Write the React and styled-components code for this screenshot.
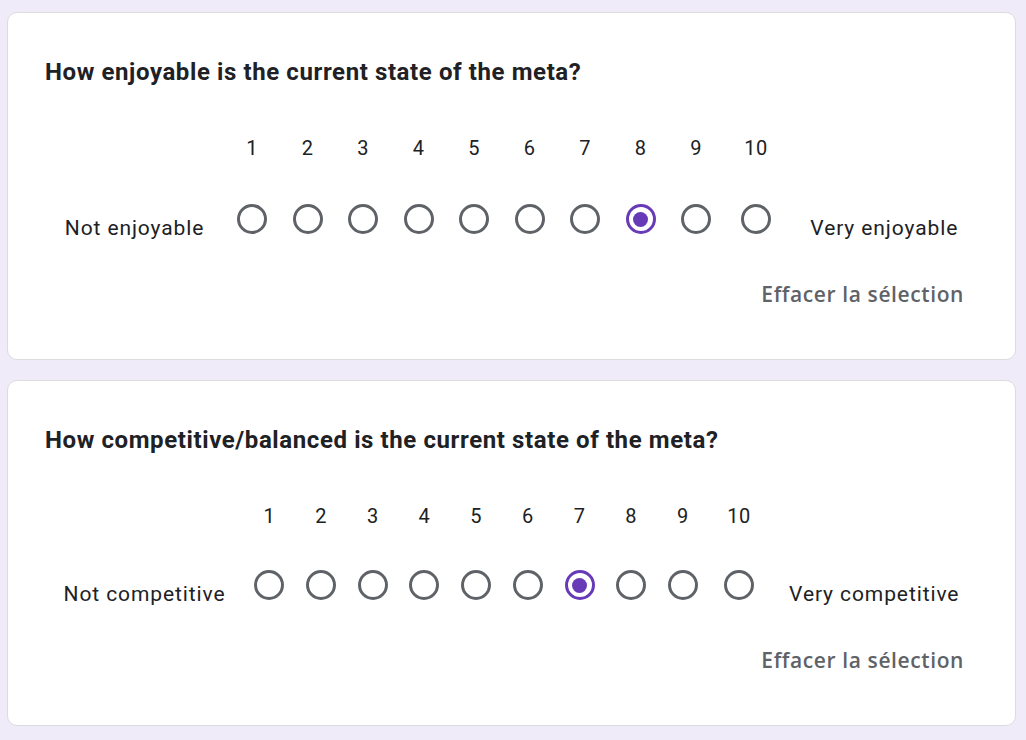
import React, { useState } from 'react';
import styled, { createGlobalStyle } from 'styled-components';

const GlobalStyle = createGlobalStyle`
  html, body {
    margin: 0;
    padding: 0;
    background: #f0ebf8;
  }
  body {
    font-family: Roboto, 'Liberation Sans', Arial, sans-serif;
    color: #202124;
  }
`;

const Page = styled.div`
  display: flex;
  flex-direction: column;
  gap: 20px;
  padding: 12px 10px 12px 7px;
`;

const Card = styled.section`
  background: #ffffff;
  border: 1px solid #dadce0;
  border-radius: 10px;
  padding: 45px 51px 53px 37px;
  display: flex;
  flex-direction: column;
`;

const Title = styled.h2`
  margin: 0;
  font-size: 24px;
  line-height: 28px;
  font-weight: 700;
  letter-spacing: 0.6px;
  color: #202124;
`;

const ScaleRow = styled.div`
  display: flex;
  align-items: flex-end;
  justify-content: center;
  margin: 50px -51px 0 -37px;
`;

const EndLabel = styled.div`
  font-size: 21px;
  line-height: 24px;
  letter-spacing: 0.9px;
  color: #202124;
  white-space: nowrap;
  padding-left: ${p => p.$padLeft || 0}px;
  padding-right: ${p => p.$padRight || 0}px;
`;

const Column = styled.label`
  display: flex;
  flex-direction: column;
  align-items: center;
  width: ${p => p.$width}px;
  padding-bottom: 6px;
  cursor: pointer;
`;

const Num = styled.span`
  font-size: 20px;
  line-height: 24px;
  letter-spacing: 0.5px;
  color: #202124;
`;

const Radio = styled.span`
  box-sizing: border-box;
  width: 30px;
  height: 30px;
  margin-top: ${p => p.$top}px;
  border-radius: 50%;
  border: 3px solid ${p => (p.$checked ? '#673ab7' : '#5f6368')};
  display: flex;
  align-items: center;
  justify-content: center;

  &::after {
    content: '';
    width: 15px;
    height: 15px;
    border-radius: 50%;
    background: #673ab7;
    display: ${p => (p.$checked ? 'block' : 'none')};
  }
`;

const Footer = styled.div`
  display: flex;
  justify-content: flex-end;
  margin-top: 42px;
`;

const ClearButton = styled.button`
  border: none;
  background: none;
  padding: 0;
  font-family: 'Open Sans', Roboto, 'Liberation Sans', Arial, sans-serif;
  font-size: 21px;
  line-height: 24px;
  font-weight: 600;
  letter-spacing: 0.6px;
  color: #5f6368;
  cursor: pointer;
`;

const questions = [
  {
    title: 'How enjoyable is the current state of the meta?',
    low: 'Not enjoyable',
    high: 'Very enjoyable',
    value: 8,
    col: 55.5,
    wide: 64.5,
    padL: 20,
    padR: 22,
    radioTop: 44,
  },
  {
    title: 'How competitive/balanced is the current state of the meta?',
    low: 'Not competitive',
    high: 'Very competitive',
    value: 7,
    col: 51.7,
    wide: 60.3,
    padL: 18,
    padR: 20,
    radioTop: 42,
  },
];

const Question = ({ q }) => {
  const [value, setValue] = useState(q.value);
  return (
    <Card>
      <Title>{q.title}</Title>
      <ScaleRow>
        <EndLabel $padRight={q.padL}>{q.low}</EndLabel>
        {Array.from({ length: 10 }, (_, i) => i + 1).map(n => (
          <Column key={n} $width={n === 10 ? q.wide : q.col} onClick={() => setValue(n)}>
            <Num>{n}</Num>
            <Radio $top={q.radioTop} $checked={value === n} />
          </Column>
        ))}
        <EndLabel $padLeft={q.padR}>{q.high}</EndLabel>
      </ScaleRow>
      <Footer>
        <ClearButton onClick={() => setValue(null)}>Effacer la sélection</ClearButton>
      </Footer>
    </Card>
  );
};

const App = () => (
  <>
    <GlobalStyle />
    <Page>
      {questions.map(q => (
        <Question key={q.title} q={q} />
      ))}
    </Page>
  </>
);

export default App;
